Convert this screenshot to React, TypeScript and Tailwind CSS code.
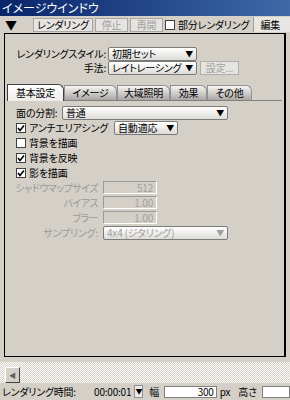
import React from "react";

const tabs = ["基本設定", "イメージ", "大域照明", "効果", "その他"];

const Select = ({ text, className, disabled }: { text: string; className: string; disabled?: boolean }) => (
    <div
        className={`flex items-center justify-between h-[14px] border border-[#7a7a7a] rounded-[2px] bg-gradient-to-b from-white to-[#dedcd8] pl-[3px] pr-[3px] ${className} ${disabled ? "text-[#a0a0a0]" : "text-black"}`}
    >
        <span className="leading-none">{text}</span>
        <span className="text-[8px] leading-none">▼</span>
    </div>
);

const Check = ({ label, checked }: { label: string; checked?: boolean }) => (
    <div className="flex items-center h-[15px]">
        <div className="w-[10px] h-[10px] border border-[#404040] bg-white flex items-center justify-center">
            {checked && (
                <svg width="8" height="8" viewBox="0 0 8 8">
                    <path d="M1 4 L3 6.5 L7 1.5" fill="none" stroke="#000" strokeWidth="1.6" />
                </svg>
            )}
        </div>
        <span className="ml-[3px] leading-none">{label}</span>
    </div>
);

const Field = ({ label, value }: { label: string; value: string }) => (
    <div className="flex items-center h-[15px]">
        <div className="w-[82px] flex justify-end leading-none text-[#9a9a9a] tracking-[-0.5px]">{label}</div>
        <div className="ml-[5px] w-[54px] h-[13px] border border-t-[#9a9a9a] border-l-[#9a9a9a] border-b-white border-r-white text-right pr-[3px] leading-[11px] text-[#a0a0a0]">
            {value}
        </div>
    </div>
);

export default function App() {
    return (
        <div className="w-[290px] h-[400px] overflow-hidden whitespace-nowrap bg-[#d4d0c8] text-[10px] tracking-[-0.2px] text-black font-['Noto_Sans_CJK_JP',sans-serif] [font-feature-settings:'palt'] flex flex-col">
            {/* Title */}
            <div className="h-[16px] shrink-0 bg-gradient-to-r from-[#0a246a] to-[#3e6aa8] text-white text-[12px] tracking-normal leading-[16px] pl-[2px]">
                イメージウインドウ
            </div>

            {/* Toolbar */}
            <div className="h-[17px] shrink-0 flex items-center">
                <span className="ml-[5px] w-[24px] text-[12px] leading-none">▼</span>
                <div className="ml-[4px] w-[60px] h-[14px] flex items-center justify-center bg-[#e6e4e0] border border-[#a8a6a2] leading-none">レンダリング</div>
                <div className="ml-[2px] w-[33px] h-[14px] flex items-center justify-center bg-[#e6e4e0] border border-[#a8a6a2] leading-none text-[#a0a0a0]">停止</div>
                <div className="ml-[2px] w-[33px] h-[14px] flex items-center justify-center bg-[#e6e4e0] border border-[#a8a6a2] leading-none text-[#a0a0a0]">再開</div>
                <div className="ml-[2px] w-[10px] h-[10px] border border-[#404040] bg-white" />
                <span className="ml-[3px] leading-none">部分レンダリング</span>
                <div className="ml-[4px] flex-1 h-[15px] flex items-center pl-[6px] bg-[#e8e6e2] border-l border-[#a0a0a0] leading-none">編集</div>
            </div>

            {/* Panel */}
            <div className="mx-[4px] h-[324px] shrink-0 border border-black border-r-2 bg-[#d4d0c8] flex flex-col">
                <div className="pt-[13px] flex flex-col">
                    <div className="flex items-center h-[13px]">
                        <span className="w-[101px] text-right leading-none">レンダリングスタイル:</span>
                        <Select text="初期セット" className="ml-[2px] w-[89px]" />
                    </div>
                    <div className="flex items-center h-[13px] mt-[1px]">
                        <span className="w-[101px] text-right leading-none">手法:</span>
                        <Select text="レイトレーシング" className="ml-[2px] w-[89px]" />
                        <div className="ml-[3px] w-[39px] h-[14px] flex items-center justify-center bg-[#e6e4e0] border border-[#b0aea8] leading-none text-[#a0a0a0]">設定...</div>
                    </div>
                </div>

                {/* Tabs */}
                <div className="mt-[11px] ml-[2px] mr-[2px] h-[16px] flex items-end border-b border-[#808080]">
                    {tabs.map((t, i) => (
                        <div
                            key={t}
                            className={
                                i === 0
                                    ? "h-[17px] -mb-px w-[57px] flex items-center justify-center bg-gradient-to-b from-white to-[#ecebe8] border border-b-0 border-[#404040] rounded-tr-[6px] leading-none"
                                    : i === 3
                                    ? "h-[15px] w-[37px] flex items-center justify-center bg-gradient-to-b from-[#f6f5f3] to-[#a9a7a3] border border-b-0 border-[#909090] rounded-tr-[6px] leading-none"
                                    : i === 4
                                    ? "h-[15px] w-[45px] flex items-center justify-center bg-gradient-to-b from-[#f6f5f3] to-[#a9a7a3] border border-b-0 border-[#909090] rounded-tr-[6px] leading-none"
                                    : "h-[15px] w-[53px] flex items-center justify-center bg-gradient-to-b from-[#f6f5f3] to-[#a9a7a3] border border-b-0 border-[#909090] rounded-tr-[6px] leading-none"
                            }
                        >
                            {t}
                        </div>
                    ))}
                </div>

                {/* Tab content */}
                <div className="pt-[4px] pl-[11px] flex flex-col">
                    <div className="flex items-center h-[15px]">
                        <span className="w-[46px] leading-none">面の分割:</span>
                        <Select text="普通" className="w-[166px]" />
                    </div>
                    <div className="flex items-center h-[15px]">
                        <Check label="アンチエリアシング" checked />
                        <Select text="自動適応" className="ml-[6px] w-[64px]" />
                    </div>
                    <Check label="背景を描画" />
                    <Check label="背景を反映" checked />
                    <Check label="影を描画" checked />
                    <Field label="シャドウマップサイズ" value="512" />
                    <Field label="バイアス" value="1.00" />
                    <Field label="ブラー" value="1.00" />
                    <div className="flex items-center h-[15px]">
                        <div className="w-[82px] flex justify-end leading-none text-[#9a9a9a]">サンプリング:</div>
                        <Select text="4x4 (ジタリング)" className="ml-[5px] w-[125px]" disabled />
                    </div>
                </div>
            </div>

            {/* Scrollbar */}
            <div className="mt-[5px] h-[21px] shrink-0 bg-[repeating-conic-gradient(#d4d0c8_0%_25%,#ffffff_0%_50%)] bg-[length:2px_2px] flex items-end">
                <div className="ml-[5px] w-[15px] h-[16px] bg-[#d4d0c8] border border-t-white border-l-white border-b-[#404040] border-r-[#404040] flex items-center justify-center">
                    <span className="text-[7px] leading-none text-[#606060]">◀</span>
                </div>
            </div>

            {/* Status */}
            <div className="h-[17px] shrink-0 flex items-center">
                <span className="ml-[2px] w-[92px] leading-none">レンダリング時間:</span>
                <span className="ml-[6px] w-[40px] leading-none">00:00:01</span>
                <div className="ml-[3px] w-[9px] h-[13px] bg-[#ecebe8] border border-[#909090] flex items-center justify-center text-[7px] leading-none">▼</div>
                <span className="ml-[6px] leading-none">幅</span>
                <div className="ml-[5px] w-[56px] h-[12px] bg-white border border-[#808080] text-right pr-[2px] leading-[10px]">300</div>
                <span className="ml-[3px] leading-none">px</span>
                <span className="ml-[8px] leading-none">高さ</span>
                <div className="ml-[5px] w-[30px] h-[12px] bg-white border border-[#808080]" />
            </div>
        </div>
    );
}
